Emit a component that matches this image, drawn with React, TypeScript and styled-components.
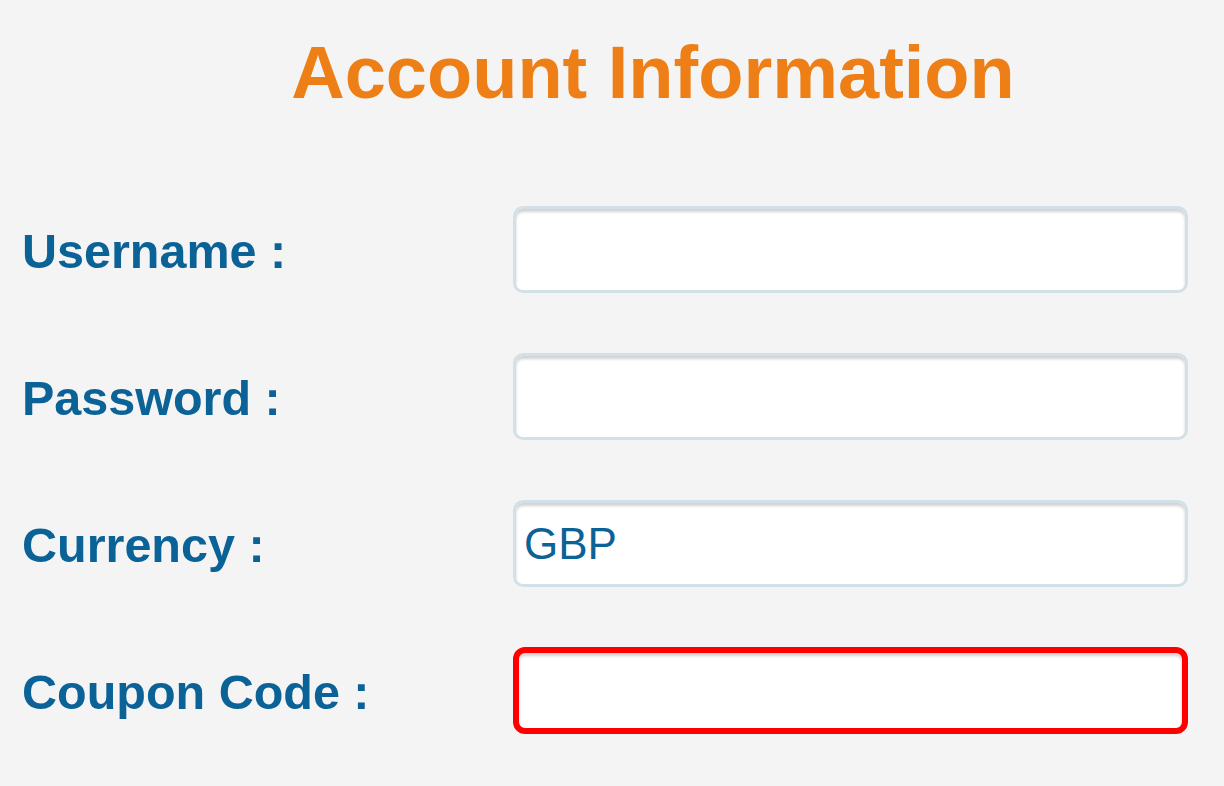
import styled, { createGlobalStyle } from "styled-components"

const GlobalStyle = createGlobalStyle`
    html, body {
        margin: 0;
        padding: 0;
        background: #f4f4f4;
    }
    body {
        font-family: "Liberation Sans", Arial, Helvetica, sans-serif;
    }
`

interface FieldType {
    label: string
    value?: string
    invalid?: boolean
}

const fields: FieldType[] = [
    { label: 'Username :' },
    { label: 'Password :' },
    { label: 'Currency :', value: 'GBP' },
    { label: 'Coupon Code :', invalid: true },
]

export default function App () {
    return (
        <Page>
            <GlobalStyle />
            <Title>Account Information</Title>
            <Form>
                { fields.map( (f, i) => (
                    <Row key={i}>
                        <Label>{f.label}</Label>
                        <Input $invalid={f.invalid} defaultValue={f.value} readOnly />
                    </Row>
                ) ) }
            </Form>
        </Page>
    )
}

const Page = styled.div`
    width: 1224px;
    height: 786px;
    box-sizing: border-box;
    padding: 36px 0 0 22px;
    overflow: hidden;
`

const Title = styled.h1`
    margin: 0;
    padding-left: 60px;
    text-align: center;
    font-size: 74px;
    line-height: 74px;
    font-weight: 700;
    color: #ee7f16;
`

const Form = styled.div`
    margin-top: 96px;
    display: flex;
    flex-direction: column;
    gap: 60px;
`

const Row = styled.div`
    display: grid;
    grid-template-columns: 491px 675px;
    align-items: center;
    height: 87px;
`

const Label = styled.label`
    padding-top: 3px;
    font-size: 48.5px;
    font-weight: 700;
    color: #0b6297;
    white-space: nowrap;
`

const Input = styled.input<{ $invalid?: boolean }>`
    box-sizing: border-box;
    width: 675px;
    height: 87px;
    margin: 0;
    padding: 0 8px;
    background: #fff;
    border: ${p => p.$invalid ? '6px solid #ff0000' : '3px solid #d3e0e8'};
    border-radius: ${p => p.$invalid ? '12px' : '10px'};
    box-shadow: inset 0 3px 3px rgba(0, 0, 0, 0.18);
    font-family: "Liberation Sans", Arial, Helvetica, sans-serif;
    font-size: 44px;
    color: #0b6297;
    outline: none;
`
